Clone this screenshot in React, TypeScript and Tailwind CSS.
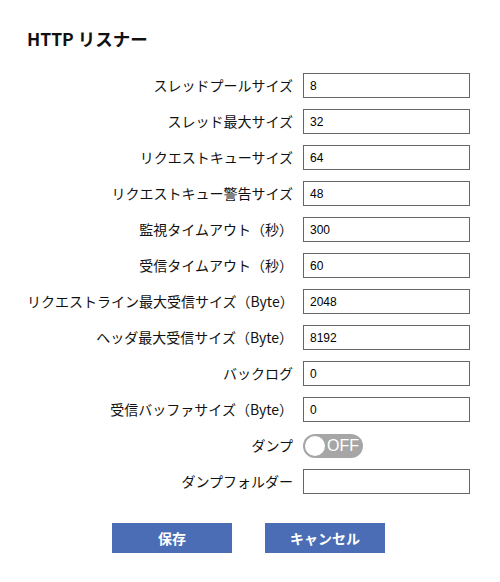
import React, { useState } from 'react';

const rows: { label: string; value: string }[] = [
  { label: 'スレッドプールサイズ', value: '8' },
  { label: 'スレッド最大サイズ', value: '32' },
  { label: 'リクエストキューサイズ', value: '64' },
  { label: 'リクエストキュー警告サイズ', value: '48' },
  { label: '監視タイムアウト（秒）', value: '300' },
  { label: '受信タイムアウト（秒）', value: '60' },
  { label: 'リクエストライン最大受信サイズ（Byte）', value: '2048' },
  { label: 'ヘッダ最大受信サイズ（Byte）', value: '8192' },
  { label: 'バックログ', value: '0' },
  { label: '受信バッファサイズ（Byte）', value: '0' },
];

const App = () => {
  const [dump, setDump] = useState(false);

  return (
    <div className="w-[500px] h-[582px] bg-white text-[#111] font-['Noto_Sans_CJK_JP','Noto_Sans',sans-serif]">
      <h2 className="pt-[26px] pl-[27px] text-[17.5px] font-bold leading-[25px]">HTTP リスナー</h2>

      <div className="mt-[22px] ml-[27px] grid grid-cols-[266px_167px] gap-x-[10px] gap-y-[11px] items-center">
        {rows.map((r) => (
          <React.Fragment key={r.label}>
            <label className="text-right text-[14px] leading-[25px] whitespace-nowrap">{r.label}</label>
            <input
              defaultValue={r.value}
              className="h-[25px] border border-[#666] px-[6px] text-[12px] font-['Liberation_Sans',sans-serif] text-black outline-none"
            />
          </React.Fragment>
        ))}

        <label className="text-right text-[14px] leading-[25px]">ダンプ</label>
        <div>
          <button
            onClick={() => setDump(!dump)}
            className="relative flex items-center w-[60px] h-[24px] rounded-full bg-[#a6a6a6]"
          >
            <span className="absolute left-[2px] top-[2px] w-[20px] h-[20px] rounded-full bg-white" />
            <span className="ml-[24px] text-white text-[16px] leading-none font-['Liberation_Sans',sans-serif]">
              {dump ? 'ON' : 'OFF'}
            </span>
          </button>
        </div>

        <label className="text-right text-[14px] leading-[25px]">ダンプフォルダー</label>
        <input className="h-[25px] border border-[#666] px-[6px] text-[12px] outline-none" />
      </div>

      <div className="mt-[29px] flex gap-[33px] pl-[112px]">
        <button className="w-[120px] h-[30px] bg-[#4a6db5] text-white text-[14px] font-bold">保存</button>
        <button className="w-[120px] h-[30px] bg-[#4a6db5] text-white text-[14px] font-bold">キャンセル</button>
      </div>
    </div>
  );
};

export default App;
